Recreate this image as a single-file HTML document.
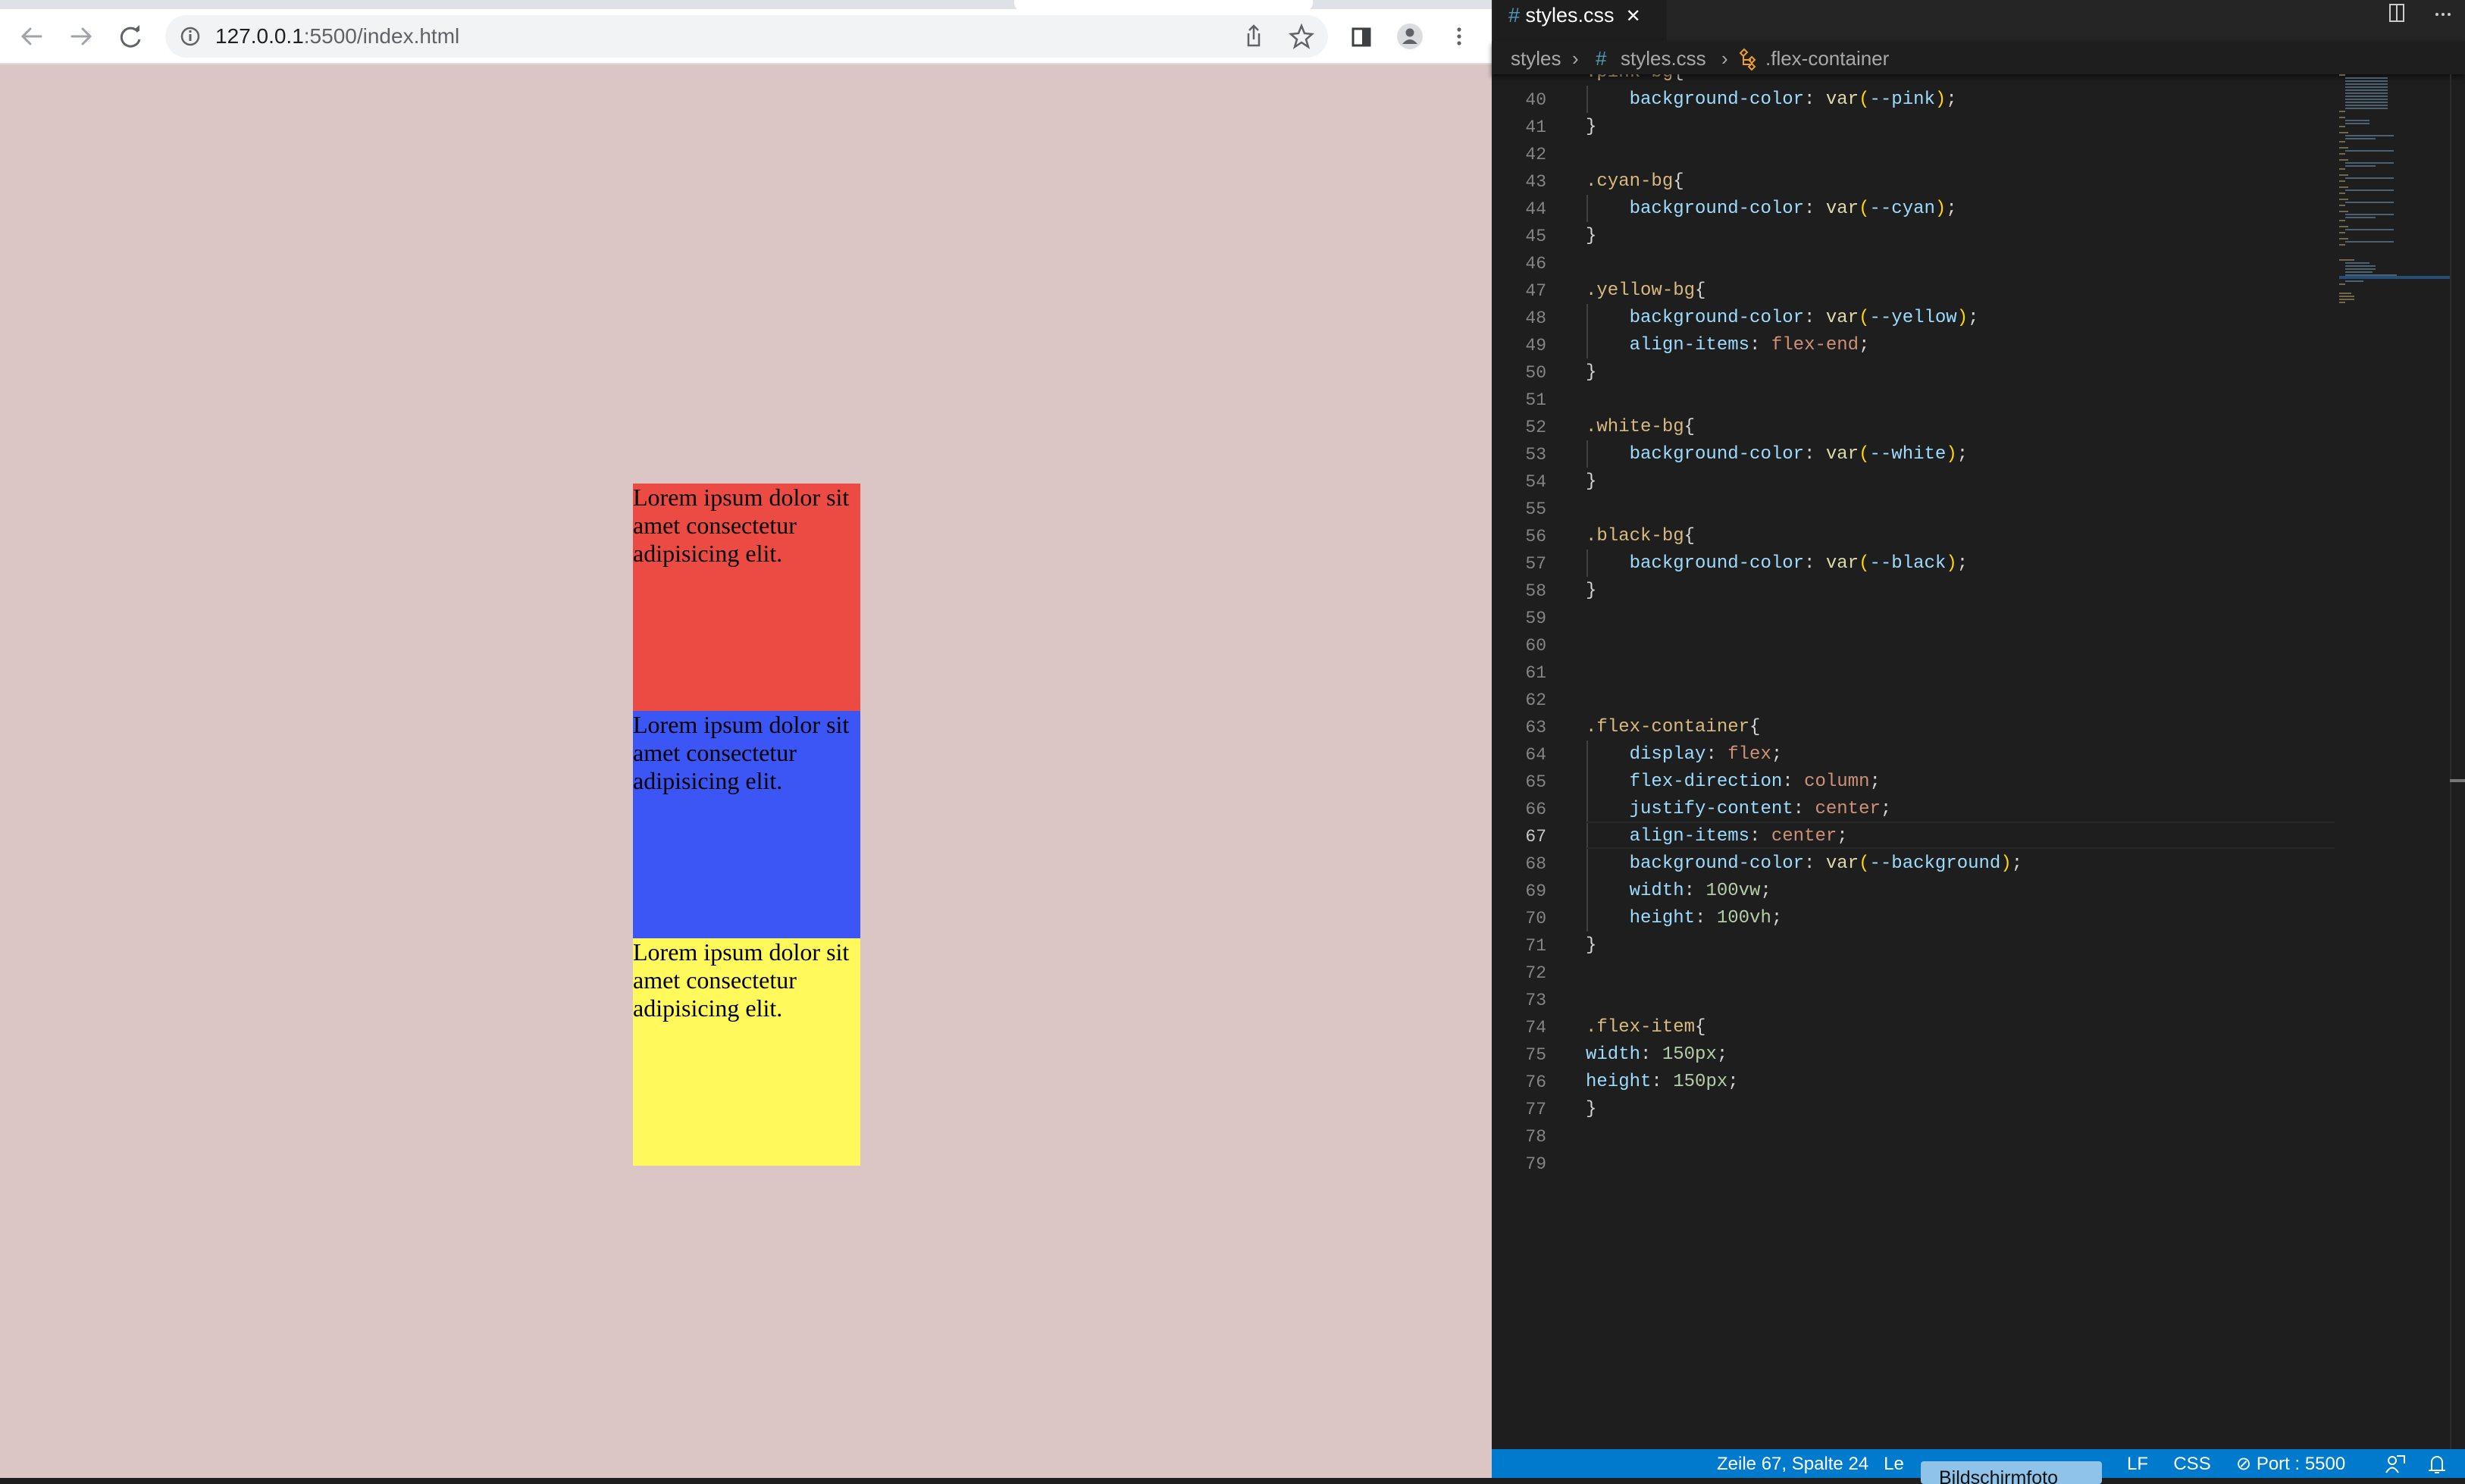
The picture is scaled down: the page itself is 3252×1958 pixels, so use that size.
<!DOCTYPE html>
<html><head><meta charset="utf-8"><style>
*{box-sizing:border-box;margin:0;padding:0}
body{width:3252px;height:1950px;overflow:hidden;position:relative;background:#1e1e1e;font-family:"Liberation Sans",sans-serif}
.abs{position:absolute}
#browser{left:0;top:0;width:1968px;height:1950px;background:#dbc6c5}
#tabstrip{left:0;top:0;width:1968px;height:12px;background:#dee1e6}
#toolbar{left:0;top:12px;width:1968px;height:73px;background:#fff;border-bottom:2px solid #ddd}
#url{left:218px;top:20px;width:1534px;height:56px;border-radius:28px;background:#f1f3f4}
.box{position:absolute;left:835px;width:300px;height:300px;font-family:"Liberation Serif",serif;font-size:32px;line-height:37px;color:#000}
#editor{left:1968px;top:0;width:1284px;height:1950px;background:#1e1e1e}
.ln{position:absolute;left:1968px;width:72px;text-align:right;font-family:"Liberation Mono",monospace;font-size:23px;color:#858585;height:36px;line-height:38px}
.cd{position:absolute;left:2092px;font-family:"Liberation Mono",monospace;font-size:24px;color:#d4d4d4;white-space:pre;height:36px;line-height:38px}
.s{color:#d7ba7d}.p{color:#9cdcfe}.v{color:#ce9178}.n{color:#b5cea8}.f{color:#dcdcaa}.b{color:#ffd700}
#status{left:1968px;top:1912px;width:1284px;height:38px;background:#007acc;color:#fff;font-size:24px}
.bc{position:absolute;top:57px;line-height:40px;font-size:26px;color:#a9a9a9;white-space:pre}
</style></head><body>
<div id="browser" class="abs"></div>
<div id="tabstrip" class="abs"></div>
<div class="abs" style="left:1338px;top:0;width:394px;height:14px;background:#fff;border-radius:0 0 10px 10px"></div>
<div id="toolbar" class="abs"></div>
<div id="url" class="abs"></div>
<svg class="abs" style="left:0;top:12px" width="1968" height="73">
<g stroke="#a0a4a8" stroke-width="3" fill="none" stroke-linecap="round">
<path d="M54 36H30M40 26L30 36L40 46"/>
<path d="M95 36H119M109 26L119 36L109 46"/>
</g>
<path d="M182 30A12 12 0 1 0 184 40" stroke="#5f6368" stroke-width="3" fill="none"/>
<path d="M176 28L184 29L184 21Z" fill="#5f6368"/>
<circle cx="251" cy="36" r="11" stroke="#5f6368" stroke-width="2.5" fill="none"/>
<rect x="249.5" y="33" width="3" height="9" fill="#5f6368"/><rect x="249.5" y="28" width="3" height="3" fill="#5f6368"/>
<path d="M1647 32V48H1661V32M1654 22V40M1648 28L1654 22L1660 28" stroke="#5f6368" stroke-width="2.5" fill="none"/>
<path d="M1717 22L1721 32L1731 33L1723 40L1726 50L1717 44L1708 50L1711 40L1703 33L1713 32Z" stroke="#5f6368" stroke-width="2.5" fill="none"/>
<rect x="1785" y="26" width="22" height="22" stroke="#3c4043" stroke-width="3" fill="none"/><rect x="1797" y="26" width="10" height="22" fill="#3c4043"/>
<circle cx="1860" cy="36" r="17" fill="#dadce0"/><circle cx="1860" cy="31" r="5.5" fill="#5f6368"/><path d="M1850 46Q1860 34 1870 46Z" fill="#5f6368"/>
<circle cx="1925" cy="27" r="2.6" fill="#5f6368"/><circle cx="1925" cy="36" r="2.6" fill="#5f6368"/><circle cx="1925" cy="45" r="2.6" fill="#5f6368"/>
</svg>
<div class="abs" style="left:284px;top:30px;font-size:28px;color:#202124;line-height:36px">127.0.0.1<span style="color:#5f6368">:5500/index.html</span></div>
<div class="box" style="top:638px;background:#ec4b43">Lorem ipsum dolor sit amet consectetur adipisicing elit.</div>
<div class="box" style="top:938px;background:#3c55f5">Lorem ipsum dolor sit amet consectetur adipisicing elit.</div>
<div class="box" style="top:1238px;background:#fff95b">Lorem ipsum dolor sit amet consectetur adipisicing elit.</div>

<div id="editor" class="abs"></div>
<div class="abs" style="left:1968px;top:0;width:1284px;height:54px;background:#252526"></div>
<div class="abs" style="left:1970px;top:0;width:229px;height:54px;background:#1e1e1e"></div>
<div class="abs" style="left:1990px;top:0;height:40px;line-height:40px;font-size:27px;color:#fff"><span style="color:#519aba">#</span>&nbsp;styles.css&nbsp;&nbsp;<span style="font-size:24px">✕</span></div>
<svg class="abs" style="left:3140px;top:4px" width="110" height="28"><rect x="13" y="2" width="18" height="22" stroke="#ccc" stroke-width="2" fill="none"/><line x1="22" y1="2" x2="22" y2="24" stroke="#ccc" stroke-width="2"/><circle cx="75" cy="15" r="2" fill="#ccc"/><circle cx="83" cy="15" r="2" fill="#ccc"/><circle cx="91" cy="15" r="2" fill="#ccc"/></svg>

<div class="ln" style="top:77px;height:20px;overflow:hidden">39</div>
<div id="code"></div>
<div class="abs" style="left:1968px;top:54px;width:1284px;height:44px;background:#1e1e1e;box-shadow:0 4px 6px rgba(0,0,0,.5)"></div>
<div class="bc" style="left:1993px">styles</div>
<div class="bc" style="left:2074px">›</div>
<div class="bc" style="left:2105px;color:#519aba">#</div>
<div class="bc" style="left:2138px">styles.css</div>
<div class="bc" style="left:2271px">›</div>
<div class="bc" style="left:2329px">.flex-container</div>
<svg class="abs" style="left:2293px;top:63px" width="28" height="30"><path d="M3 7L8 2L12 6L7 11ZM7 11V22H17M7 16H17M18 12L22 16L18 20L14 16ZM18 21L22 25L18 29L14 25Z" stroke="#ee9d28" stroke-width="2" fill="none"/></svg>
<div class="abs" style="left:2092px;top:1084px;width:988px;height:36px;border-top:2px solid #282828;border-bottom:2px solid #282828"></div>
<svg id="mini" class="abs" style="left:3086px;top:96px" width="150" height="320"></svg>
<div class="abs" style="left:3232px;top:98px;width:2px;height:1814px;background:#2b2b2b"></div>
<div class="abs" style="left:3232px;top:1028px;width:20px;height:4px;background:#777"></div>
<div class="abs" style="left:3086px;top:364px;width:146px;height:4px;background:#264f78"></div>

<div id="status" class="abs">
<div class="abs" style="left:297px;top:0;line-height:40px;white-space:pre">Zeile 67, Spalte 24   Le</div>
<div class="abs" style="left:838px;top:0;line-height:40px;white-space:pre">LF     CSS     ⊘ Port : 5500</div>
<svg class="abs" style="left:1178px;top:6px" width="90" height="28"><circle cx="10" cy="9" r="5" stroke="#fff" stroke-width="2" fill="none"/><path d="M2 25Q10 12 18 25M16 3H26V13" stroke="#fff" stroke-width="2" fill="none"/><path d="M62 22V11A7 7 0 0 1 76 11V22H80H58M66 25H72" stroke="#fff" stroke-width="2" fill="none"/></svg>
</div>
<div class="abs" style="left:2534px;top:1928px;width:239px;height:30px;background:#8fc3ea;border-radius:4px;font-size:25px;color:#111;padding-left:24px;line-height:44px;overflow:hidden">Bildschirmfoto</div>

<script>
var L={40:'    <span class="p">background-color</span>: <span class="f">var</span><span class="b">(</span><span class="p">--pink</span><span class="b">)</span>;',41:'}',43:'<span class="s">.cyan-bg</span>{',44:'    <span class="p">background-color</span>: <span class="f">var</span><span class="b">(</span><span class="p">--cyan</span><span class="b">)</span>;',45:'}',47:'<span class="s">.yellow-bg</span>{',48:'    <span class="p">background-color</span>: <span class="f">var</span><span class="b">(</span><span class="p">--yellow</span><span class="b">)</span>;',49:'    <span class="p">align-items</span>: <span class="v">flex-end</span>;',50:'}',52:'<span class="s">.white-bg</span>{',53:'    <span class="p">background-color</span>: <span class="f">var</span><span class="b">(</span><span class="p">--white</span><span class="b">)</span>;',54:'}',56:'<span class="s">.black-bg</span>{',57:'    <span class="p">background-color</span>: <span class="f">var</span><span class="b">(</span><span class="p">--black</span><span class="b">)</span>;',58:'}',63:'<span class="s">.flex-container</span>{',64:'    <span class="p">display</span>: <span class="v">flex</span>;',65:'    <span class="p">flex-direction</span>: <span class="v">column</span>;',66:'    <span class="p">justify-content</span>: <span class="v">center</span>;',67:'    <span class="p">align-items</span>: <span class="v">center</span>;',68:'    <span class="p">background-color</span>: <span class="f">var</span><span class="b">(</span><span class="p">--background</span><span class="b">)</span>;',69:'    <span class="p">width</span>: <span class="n">100vw</span>;',70:'    <span class="p">height</span>: <span class="n">100vh</span>;',71:'}',74:'<span class="s">.flex-item</span>{',75:'<span class="p">width</span>: <span class="n">150px</span>;',76:'<span class="p">height</span>: <span class="n">150px</span>;',77:'}'};
var h='<div class="cd" style="top:77px"><span class="s">.pink-bg</span>{</div>';
for(var n=40;n<=79;n++){var t=113+(n-40)*36;h+='<div class="ln" style="top:'+t+'px;'+(n==67?'color:#c6c6c6':'')+'">'+n+'</div>';if(L[n])h+='<div class="cd" style="top:'+t+'px">'+L[n]+'</div>';}
h+='<div class="abs" style="left:2093px;top:113px;width:2px;height:36px;background:#404040"></div>';
[[44,1],[48,2],[53,1],[57,1],[64,7]].forEach(function(a){h+='<div class="abs" style="left:2093px;top:'+(113+(a[0]-40)*36)+'px;width:2px;height:'+(a[1]*36)+'px;background:#404040"></div>'});
document.getElementById('code').innerHTML=h;
var m='',rows=[2,14,14,14,14,14,14,14,14,14,14,14,2,0,2,8,8,2,0,3,16,10,2,0,3,16,2,0,3,16,10,2,0,3,16,2,0,3,16,2,0,3,16,2,0,3,16,10,2,0,3,16,2,0,3,16,2,0,0,0,0,5,8,10,10,9,17,6,6,2,0,0,4,5,5,2];
rows.forEach(function(w,i){if(w){var x=i==0||w<6?0:8;m+='<rect x="'+x+'" y="'+(i*4+2)+'" width="'+(w*4)+'" height="2" fill="'+(w<6?'#c8b27a':'#7ba6c4')+'" opacity=".5"/>';}});
document.getElementById('mini').innerHTML=m;
</script>
</body></html>
